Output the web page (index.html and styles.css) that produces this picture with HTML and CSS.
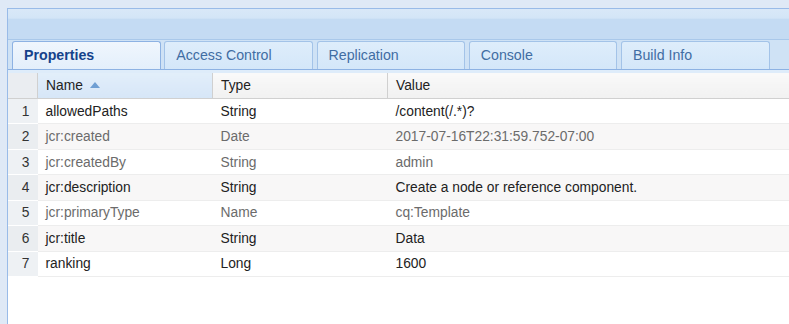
FILE: index.html
```html
<!DOCTYPE html>
<html lang="en">
  <head>
    <meta charset="UTF-8" />
    <title>Properties</title>
    <link rel="stylesheet" href="styles.css">
  </head>
  <body>
    <div class="topband"></div>
    <div class="panel">
      <div class="panelhead"></div>
      <nav class="tabs">
        <div class="tab active">Properties</div>
        <div class="tab">Access Control</div>
        <div class="tab">Replication</div>
        <div class="tab">Console</div>
        <div class="tab">Build Info</div>
      </nav>
      <div class="strip"></div>
      <table class="props">
        <thead>
          <tr>
            <th class="num"></th>
            <th class="sorted">Name <span class="arrow"></span></th>
            <th>Type</th>
            <th>Value</th>
          </tr>
        </thead>
        <tbody>
          <tr>
            <td class="num">1</td>
            <td>allowedPaths</td>
            <td>String</td>
            <td>/content(/.*)?</td>
          </tr>
          <tr class="alt dim">
            <td class="num">2</td>
            <td>jcr:created</td>
            <td>Date</td>
            <td>2017-07-16T22:31:59.752-07:00</td>
          </tr>
          <tr class="dim">
            <td class="num">3</td>
            <td>jcr:createdBy</td>
            <td>String</td>
            <td>admin</td>
          </tr>
          <tr class="alt">
            <td class="num">4</td>
            <td>jcr:description</td>
            <td>String</td>
            <td>Create a node or reference component.</td>
          </tr>
          <tr class="dim">
            <td class="num">5</td>
            <td>jcr:primaryType</td>
            <td>Name</td>
            <td>cq:Template</td>
          </tr>
          <tr class="alt">
            <td class="num">6</td>
            <td>jcr:title</td>
            <td>String</td>
            <td>Data</td>
          </tr>
          <tr>
            <td class="num">7</td>
            <td>ranking</td>
            <td>Long</td>
            <td>1600</td>
          </tr>
        </tbody>
      </table>
    </div>
  </body>
</html>
```

FILE: styles.css
```css
body {
  margin: 0;
  padding: 0;
  width: 789px;
  height: 324px;
  overflow: hidden;
  background: #dfe9f6;
  font-family: "Liberation Sans", Arial, sans-serif;
  font-size: 13.8px;
}

.topband {
  height: 8px;
  background: #dfe9f6;
}

.panel {
  margin-left: 7px;
  height: 316px;
  border-left: 1px solid #99bbe8;
  border-top: 1px solid #99bbe8;
  background: #ffffff;
}

.panelhead {
  height: 30px;
  background: linear-gradient(180deg, #d9e8f8 0%, #d3e5f7 30%, #c4dbf3 35%, #c4dbf3 100%);
  border-bottom: 1px solid #a9c8ea;
}

.tabs {
  display: flex;
  gap: 3.75px;
  height: 28px;
  padding: 1px 0 0 4px;
  background: #cfe2f5;
  border-bottom: 1px solid #8db2e3;
}

.tab {
  flex: none;
  width: 124.5px;
  padding-left: 11px;
  padding-right: 11px;
  line-height: 26px;
  font-size: 14.2px;
  border: 1px solid #a3c3e8;
  border-bottom: none;
  border-radius: 3px 3px 0 0;
  background: linear-gradient(180deg, #deedfb, #d4e7f9);
  color: #416da3;
}

.tab.active {
  background: linear-gradient(180deg, #f0f6fd, #e3effb);
  color: #15428b;
  font-weight: bold;
  border-color: #8db2e3;
}

.strip {
  height: 3px;
  background: #deecfa;
}

.props {
  width: 100%;
  border-collapse: collapse;
  table-layout: fixed;
}

.props th {
  height: 25px;
  padding: 0 8px;
  text-align: left;
  font-weight: normal;
  color: #222;
  background: linear-gradient(180deg, #f9f9f9, #f1f1f1);
  border-left: 1px solid #d0d0d0;
  border-bottom: 1px solid #d0d0d0;
}

.props th.num {
  width: 29px;
  padding: 0;
  border-left: none;
  background: #eaedf1;
}

.props th.sorted {
  width: 158px;
  background: linear-gradient(180deg, #e2eefa, #d6e6f7);
}

.props th:nth-child(3) {
  width: 158px;
}

.arrow {
  display: inline-block;
  margin-left: 3px;
  vertical-align: 2px;
  border-left: 5px solid transparent;
  border-right: 5px solid transparent;
  border-bottom: 6px solid #6f9fd3;
}

.props td {
  height: 24.45px;
  padding: 0 8px;
  color: #222;
  border-bottom: 1px solid #ededed;
  white-space: nowrap;
}

.props td.num {
  padding: 0 8px 0 0;
  text-align: right;
  color: #333;
  background: #eef1f4;
  border-bottom-color: #ffffff;
}

.props tr.alt td {
  background: #f8f7f7;
}

.props tr.alt td.num {
  background: #eaedf0;
}

.props tr.dim td {
  color: #6b6b6b;
}

.props tr.dim td.num {
  color: #333;
}
```
